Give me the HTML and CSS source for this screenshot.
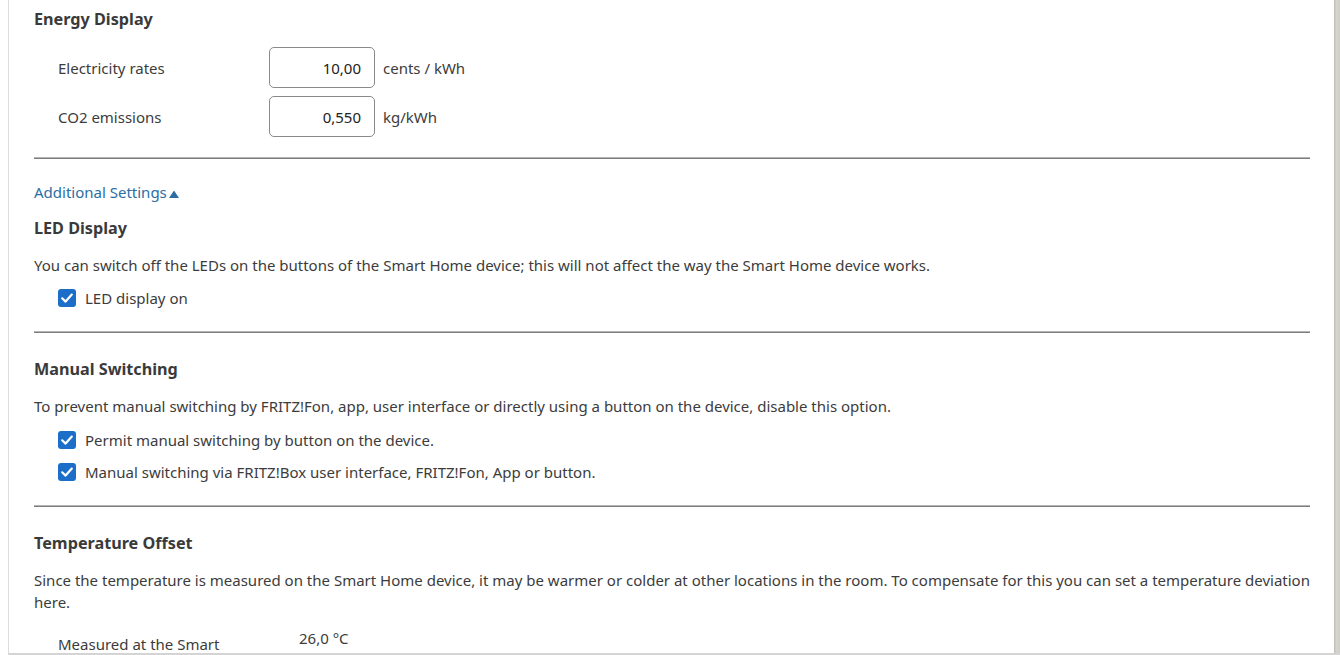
FILE: index.html
```html
<!DOCTYPE html>
<html lang="en">
<head>
<meta charset="utf-8">
<title>Smart Home device settings</title>
<link rel="stylesheet" href="styles.css">
</head>
<body>
<div class="frame">
  <div class="content">
    <section class="block">
      <h2 class="heading">Energy Display</h2>
      <div class="field-rows">
        <div class="field-row">
          <label class="field-label" for="rate">Electricity rates</label>
          <input class="field-input" id="rate" type="text" value="10,00">
          <span class="unit">cents / kWh</span>
        </div>
        <div class="field-row">
          <label class="field-label" for="co2">CO2 emissions</label>
          <input class="field-input" id="co2" type="text" value="0,550">
          <span class="unit">kg/kWh</span>
        </div>
      </div>
    </section>
    <hr class="divider divider-energy">
    <div class="toggle"><a class="toggle-link" href="#">Additional Settings<svg class="arrow" viewBox="0 0 10 8" width="10" height="8"><path d="M0 8 L5 0.5 L10 8 Z" fill="currentColor"/></svg></a></div>

    <section class="block block-led">
      <h2 class="heading">LED Display</h2>
      <p class="text">You can switch off the LEDs on the buttons of the Smart Home device; this will not affect the way the Smart Home device works.</p>
      <div class="checks">
        <label class="check"><span class="box"><svg viewBox="0 0 18 18" width="18" height="18"><path d="M4.2 9.3 L7.6 12.6 L13.8 5.6" fill="none" stroke="#fff" stroke-width="2.2" stroke-linecap="round" stroke-linejoin="round"/></svg></span>LED display on</label>
      </div>
    </section>
    <hr class="divider">

    <section class="block">
      <h2 class="heading">Manual Switching</h2>
      <p class="text">To prevent manual switching by FRITZ!Fon, app, user interface or directly using a button on the device, disable this option.</p>
      <div class="checks checks-manual">
        <label class="check"><span class="box"><svg viewBox="0 0 18 18" width="18" height="18"><path d="M4.2 9.3 L7.6 12.6 L13.8 5.6" fill="none" stroke="#fff" stroke-width="2.2" stroke-linecap="round" stroke-linejoin="round"/></svg></span>Permit manual switching by button on the device.</label>
        <label class="check"><span class="box"><svg viewBox="0 0 18 18" width="18" height="18"><path d="M4.2 9.3 L7.6 12.6 L13.8 5.6" fill="none" stroke="#fff" stroke-width="2.2" stroke-linecap="round" stroke-linejoin="round"/></svg></span>Manual switching via FRITZ!Box user interface, FRITZ!Fon, App or button.</label>
      </div>
    </section>
    <hr class="divider">

    <section class="block">
      <h2 class="heading">Temperature Offset</h2>
      <p class="text">Since the temperature is measured on the Smart Home device, it may be warmer or colder at other locations in the room. To compensate for this you can set a temperature deviation here.</p>
      <div class="temp-row">
        <span class="temp-label">Measured at the Smart Home device</span>
        <span class="temp-value">26,0 °C</span>
      </div>
    </section>
  </div>
</div>
</body>
</html>
```
FILE: styles.css
```css
* { box-sizing: border-box; }
html, body { margin: 0; padding: 0; background: #fff; }
body {
  font-family: "Noto Sans", "Open Sans", "Liberation Sans", sans-serif;
  font-size: 15px;
  line-height: 22px;
  color: #3c3c3c;
}
.frame {
  margin-left: 8px;
  height: 655px;
  overflow: hidden;
  border-left: 1px solid #dcdcdc;
  border-bottom: 2px solid #d4d4d4;
  display: flex;
}
.frame::after {
  content: "";
  flex: 0 0 6px;
  background: linear-gradient(to right, #bdbdb6, #d6d6cf 40%, #cfcfc8);
}
.content {
  flex: 1;
  padding: 8px 24px 0 25px;
}
.heading {
  margin: 0;
  font-size: 16.2px;
  line-height: 22px;
  font-weight: 700;
  color: #3a3a3a;
}
.field-rows {
  margin-top: 17px;
  display: flex;
  flex-direction: column;
  gap: 8px;
}
.field-row {
  display: flex;
  align-items: center;
  padding-left: 24px;
}
.field-label { width: 211px; }
.field-input {
  width: 106px;
  height: 41px;
  border: 1px solid #8a8a8a;
  border-radius: 5px;
  text-align: right;
  padding: 0 13px 0 8px;
  font: inherit;
  color: #222;
}
.unit { margin-left: 8px; }
.divider {
  margin: 0;
  height: 0;
  border: 0;
  border-top: 1px solid #b4b4b4;
  border-bottom: 1px solid #7e7e7e;
}
.block + .divider { margin-top: 22px; }
.block + .divider.divider-energy { margin-top: 20px; }
.divider + .block { margin-top: 25px; }
.toggle {
  margin-top: 22px;
  height: 22px;
  line-height: 22px;
}
.toggle-link {
  color: #2b6ea3;
  text-decoration: none;
}
.arrow {
  margin-left: 2px;
  vertical-align: 0;
}
.toggle + .block { margin-top: 14px; }
.text { margin: 15px 0 0; }
.checks {
  margin-top: 11px;
  padding-left: 24px;
  display: flex;
  flex-direction: column;
  gap: 10px;
}
.checks-manual { margin-top: 12px; }
.check {
  display: flex;
  align-items: center;
  gap: 9px;
}
.box {
  width: 18px;
  height: 18px;
  border-radius: 3px;
  background: #1c6ec8;
  display: flex;
}
.temp-row {
  margin-top: 14px;
  padding-left: 24px;
  display: flex;
  align-items: flex-start;
}
.temp-label {
  width: 180px;
  padding-top: 6px;
}
.temp-value { margin-left: 61px; }
```
